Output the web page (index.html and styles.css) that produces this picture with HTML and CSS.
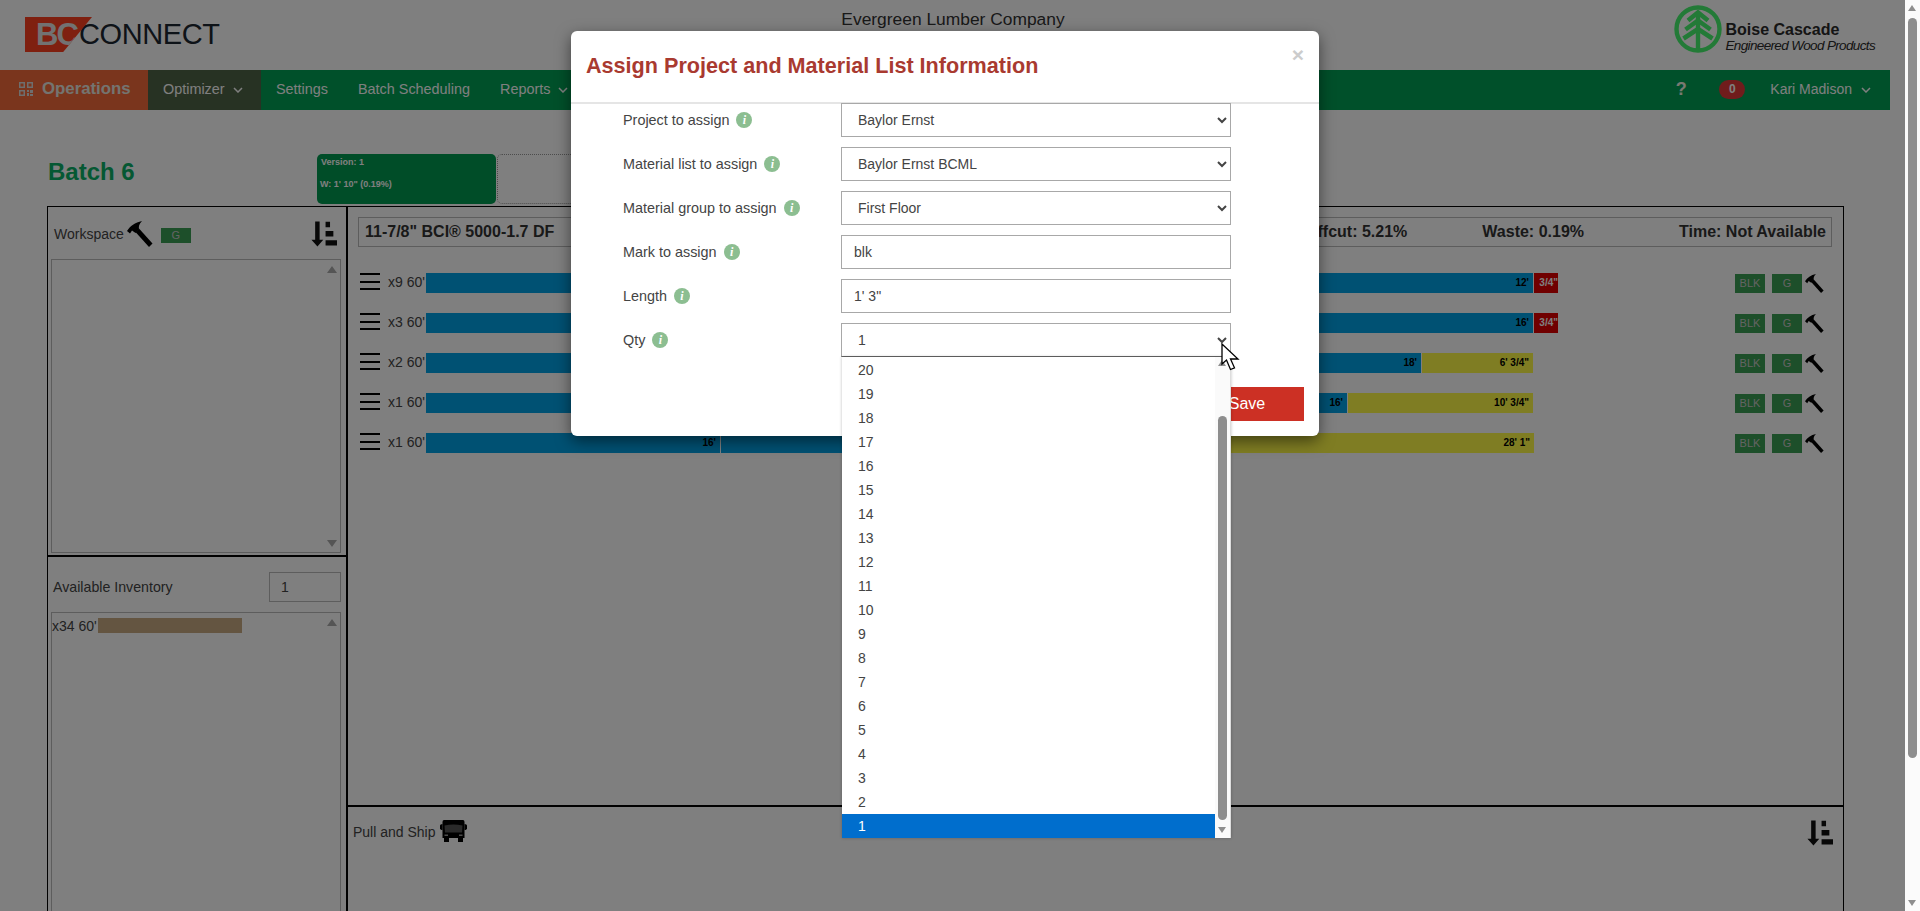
FILE: index.html
```html
<!DOCTYPE html>
<html lang="en">
<head>
<meta charset="utf-8">
<title>BC Connect - Batch 6</title>
<link rel="stylesheet" href="styles.css">
</head>
<body>
<svg class="defs" aria-hidden="true">
  <symbol id="hammer" viewBox="0 0 26 26">
    <path d="M0 10C3 5 8 1.500 15 0 12 3 11.500 5.500 12 8L8.500 12 5 9.500 3 12.500Z" fill="#000"/>
    <path d="M8.500 11 12 7.500 25.500 22.500 22 26Z" fill="#000"/>
  </symbol>
  <symbol id="sort" viewBox="0 0 25 24">
    <path d="M4 0H8.300V17.500H11.800L6.200 24 .4 17.500H4Z" fill="#111"/>
    <path d="M14 .3H18.300V5.500H14ZM14 9H21.500V14.500H14ZM14 18H25V23H14Z" fill="#111"/>
  </symbol>
  <symbol id="chev" viewBox="0 0 10 6">
    <path d="M1 1 5 5 9 1" fill="none" stroke="currentColor" stroke-width="1.5"/>
  </symbol>
</svg>
<div class="shell">
  <div class="page">
    <div class="page-inner">
      <header class="topbar">
        <div class="brand">
          <span class="brand-mark"><span class="brand-bc">BC</span></span>
          <span class="brand-connect">CONNECT</span>
        </div>
        <div class="company">Evergreen Lumber Company</div>
        <div class="boise">
          <svg class="boise-tree" viewBox="0 0 48 48">
            <circle cx="24" cy="24" r="21.500" fill="none" stroke="#46f46e" stroke-width="4.400"/>
            <path d="M21.800 7H26.200V45H21.800Z" fill="#46f46e"/>
            <path d="M14 15.500 24 7.500 34 15.500M11.500 24.500 24 15.500 36.500 24.500M9.500 33.500 24 24 38.500 33.500" fill="none" stroke="#46f46e" stroke-width="4.600"/>
          </svg>
          <div class="boise-text">
            <div class="boise-name">Boise Cascade</div>
            <div class="boise-sub">Engineered Wood Products</div>
          </div>
        </div>
      </header>
      <nav class="nav">
        <a class="nav-ops">
          <svg class="ops-icon" viewBox="0 0 14 14"><path d="M0 0H6V6H0ZM1.500 1.500V4.500H4.500V1.500ZM8 0H14V6H8ZM9.500 1.500V4.500H12.500V1.500ZM0 8H6V14H0ZM1.500 9.500V12.500H4.500V9.500ZM8 8H10V10H8ZM11 8H14V11H11ZM8 11H10V14H8ZM11 12H14V14H11Z" fill="#dcdcdc" fill-rule="evenodd"/></svg>
          Operations
        </a>
        <a class="nav-item nav-active">Optimizer <svg class="chev"><use href="#chev"/></svg></a>
        <a class="nav-item">Settings</a>
        <a class="nav-item">Batch Scheduling</a>
        <a class="nav-item">Reports <svg class="chev"><use href="#chev"/></svg></a>
        <div class="nav-right">
          <span class="nav-help">?</span>
          <span class="nav-pill">0</span>
          <a class="nav-user">Kari Madison <svg class="chev"><use href="#chev"/></svg></a>
        </div>
      </nav>
      <main class="main">
        <div class="batch-head">
          <h1 class="batch-title">Batch 6</h1>
          <div class="tab tab-on">
            <div class="tab-version">Version: 1</div>
            <div class="tab-waste">W: 1' 10" (0.19%)</div>
          </div>
          <div class="tab tab-empty"></div>
        </div>
        <div class="frame">
          <section class="col-left">
            <div class="panel-work">
              <div class="work-head">
                <span>Workspace</span>
                <svg class="hammer-lg"><use href="#hammer"/></svg>
                <span class="tag tag-head">G</span>
                <svg class="sort-icon work-sort"><use href="#sort"/></svg>
              </div>
              <div class="listbox listbox-work">
                <i class="tri-up"></i>
                <i class="tri-down"></i>
              </div>
            </div>
            <div class="panel-inv">
              <div class="inv-head">
                <span class="inv-label">Available Inventory</span>
                <div class="inv-input">1</div>
              </div>
              <div class="listbox listbox-inv">
                <i class="tri-up"></i>
                <div class="inv-row"><span>x34 60'</span><span class="inv-bar"></span></div>
              </div>
            </div>
          </section>
          <section class="col-right">
            <div class="panel-layout">
              <div class="stats">
                <span>11-7/8" BCI® 5000-1.7 DF</span>
                <span class="stat-offcut">Offcut: 5.21%</span>
                <span class="stat-waste">Waste: 0.19%</span>
                <span class="stat-time">Time: Not Available</span>
              </div>
              <div class="rows">
                <div class="row">
                  <span class="burger"><i></i><i></i><i></i></span><span class="row-label">x9 60'</span>
                  <div class="bar">
                    <span class="seg seg-blue" style="width:296px">16'</span><span class="seg seg-blue" style="width:296px">16'</span><span class="seg seg-blue" style="width:296px">16'</span><span class="seg seg-blue" style="width:220px">12'</span><span class="seg seg-red" style="width:24px">3/4"</span>
                  </div>
                  <div class="tools"><span class="tag">BLK</span><span class="tag tag-g">G</span><svg class="hammer"><use href="#hammer"/></svg></div>
                </div>
                <div class="row">
                  <span class="burger"><i></i><i></i><i></i></span><span class="row-label">x3 60'</span>
                  <div class="bar">
                    <span class="seg seg-blue" style="width:296px">16'</span><span class="seg seg-blue" style="width:221px">12'</span><span class="seg seg-blue" style="width:296px">16'</span><span class="seg seg-blue" style="width:295px">16'</span><span class="seg seg-red" style="width:24px">3/4"</span>
                  </div>
                  <div class="tools"><span class="tag">BLK</span><span class="tag tag-g">G</span><svg class="hammer"><use href="#hammer"/></svg></div>
                </div>
                <div class="row">
                  <span class="burger"><i></i><i></i><i></i></span><span class="row-label">x2 60'</span>
                  <div class="bar">
                    <span class="seg seg-blue" style="width:332px">18'</span><span class="seg seg-blue" style="width:332px">18'</span><span class="seg seg-blue" style="width:332px">18'</span><span class="seg seg-olive" style="width:112px">6' 3/4"</span>
                  </div>
                  <div class="tools"><span class="tag">BLK</span><span class="tag tag-g">G</span><svg class="hammer"><use href="#hammer"/></svg></div>
                </div>
                <div class="row">
                  <span class="burger"><i></i><i></i><i></i></span><span class="row-label">x1 60'</span>
                  <div class="bar">
                    <span class="seg seg-blue" style="width:296px">16'</span><span class="seg seg-blue" style="width:332px">18'</span><span class="seg seg-blue" style="width:294px">16'</span><span class="seg seg-olive" style="width:186px">10' 3/4"</span>
                  </div>
                  <div class="tools"><span class="tag">BLK</span><span class="tag tag-g">G</span><svg class="hammer"><use href="#hammer"/></svg></div>
                </div>
                <div class="row">
                  <span class="burger"><i></i><i></i><i></i></span><span class="row-label">x1 60'</span>
                  <div class="bar">
                    <span class="seg seg-blue" style="width:295px">16'</span><span class="seg seg-blue" style="width:295px">16'</span><span class="seg seg-olive" style="width:519px">28' 1"</span>
                  </div>
                  <div class="tools"><span class="tag">BLK</span><span class="tag tag-g">G</span><svg class="hammer"><use href="#hammer"/></svg></div>
                </div>
              </div>
            </div>
            <div class="panel-ship">
              <span>Pull and Ship</span>
              <svg class="truck" viewBox="0 0 27 22">
                <path d="M4 0H23Q24.500 0 24.500 2V18H2.500V2Q2.500 0 4 0Z" fill="#000"/>
                <path d="M0 5.500Q0 4 2.500 4V10H1.500L0 9ZM27 5.500Q27 4 24.500 4V10H25.500L27 9Z" fill="#000"/>
                <path d="M4.500 5.500Q13.500 3.500 22.500 5.500L22 12.500H5Z" fill="#555"/>
                <path d="M4 18H9V22H4ZM18 18H23V22H18Z" fill="#000"/>
                <path d="M4.500 14.500H8V16H4.500ZM19 14.500H22.500V16H19Z" fill="#999"/>
              </svg>
              <svg class="sort-icon ship-sort"><use href="#sort"/></svg>
            </div>
          </section>
        </div>
      </main>
    </div>

    <div class="overlay">
      <div class="modal">
        <div class="modal-head">
          <h2 class="modal-title">Assign Project and Material List Information</h2>
          <span class="modal-close">×</span>
        </div>
        <div class="modal-body">
          <div class="form-row">
            <label class="form-label">Project to assign <i class="info">i</i></label>
            <select class="field"><option>Baylor Ernst</option></select>
          </div>
          <div class="form-row">
            <label class="form-label">Material list to assign <i class="info">i</i></label>
            <select class="field"><option>Baylor Ernst BCML</option></select>
          </div>
          <div class="form-row">
            <label class="form-label">Material group to assign <i class="info">i</i></label>
            <select class="field"><option>First Floor</option></select>
          </div>
          <div class="form-row">
            <label class="form-label">Mark to assign <i class="info">i</i></label>
            <input class="field" value="blk">
          </div>
          <div class="form-row">
            <label class="form-label">Length <i class="info">i</i></label>
            <input class="field" value="1' 3&quot;">
          </div>
          <div class="form-row">
            <label class="form-label">Qty <i class="info">i</i></label>
            <div class="qty-wrap">
              <select class="field field-open"><option>1</option></select>
              <div class="dropdown">
                <div class="options">
                  <div class="opt">20</div><div class="opt">19</div><div class="opt">18</div><div class="opt">17</div>
                  <div class="opt">16</div><div class="opt">15</div><div class="opt">14</div><div class="opt">13</div>
                  <div class="opt">12</div><div class="opt">11</div><div class="opt">10</div><div class="opt">9</div>
                  <div class="opt">8</div><div class="opt">7</div><div class="opt">6</div><div class="opt">5</div>
                  <div class="opt">4</div><div class="opt">3</div><div class="opt">2</div><div class="opt opt-on">1</div>
                </div>
                <div class="dd-scroll">
                  <i class="tri-up dd-up"></i>
                  <i class="dd-thumb"></i>
                  <i class="tri-down dd-down"></i>
                </div>
              </div>
              <svg class="cursor" viewBox="0 0 19 29">
                <path d="M1 1V21L5.500 17 9.500 26.500 13.500 24.800 9.500 16H17Z" fill="#fff" stroke="#000" stroke-width="1.300"/>
              </svg>
            </div>
          </div>
        </div>
        <div class="modal-foot"><button class="btn-save">Save</button></div>
      </div>
    </div>
  </div>
  <div class="page-scroll">
    <i class="tri-up ps-up"></i>
    <i class="ps-thumb"></i>
    <i class="tri-down ps-down"></i>
  </div>
</div>
</body>
</html>
```
FILE: styles.css
```css
* { box-sizing: border-box; }
html, body { margin: 0; height: 100%; overflow: hidden; }
body { font-family: "Liberation Sans", Arial, sans-serif; font-size: 14px; color: #444; background: #fff; }
.defs { display: none; }
.shell { display: flex; height: 911px; }
.page { position: relative; width: 1905px; height: 911px; overflow: hidden; background: #fff; }
.page-inner { width: 1890px; }

/* scrollbar of the page */
.page-scroll { position: relative; width: 15px; background: #fbfbfb; }
.ps-thumb { position: absolute; left: 3px; top: 18px; width: 9px; height: 740px; background: #8e8e8e; border-radius: 5px; }
.ps-up { position: absolute; left: 3px; top: 5px; }
.ps-down { position: absolute; left: 3px; bottom: 5px; }
.tri-up, .tri-down { display: block; width: 0; height: 0; border-left: 4.500px solid transparent; border-right: 4.500px solid transparent; }
.tri-up { border-bottom: 6px solid #8e8e8e; }
.tri-down { border-top: 6px solid #8e8e8e; }

/* top bar */
.topbar { height: 70px; display: grid; grid-template-columns: 1fr auto 1fr; padding: 0 15px 0 25px; }
.brand { display: flex; align-items: center; height: 35px; margin-top: 17px; }
.brand-mark { display: flex; align-items: center; width: 67px; height: 35px; padding-left: 11px; background: #ff4020; clip-path: polygon(0 0, 100% 0, 57% 100%, 0 100%); }
.brand-bc { font-size: 31px; font-weight: 700; letter-spacing: -2px; color: #e4e4e4; }
.brand-connect { margin-left: -13px; font-size: 29px; letter-spacing: -.4px; color: #1c2730; }
.company { margin: 9px 0 0 6px; font-size: 17.400px; line-height: 20px; color: #333; }
.boise { display: flex; justify-self: end; margin-top: 5px; gap: 4px; }
.boise-tree { width: 48px; height: 48px; }
.boise-text { margin-top: 17px; color: #2a2a2a; }
.boise-name { font-size: 16px; font-weight: 700; line-height: 16px; }
.boise-sub { font-size: 13.500px; font-style: italic; line-height: 15px; letter-spacing: -.65px; }

/* navigation */
.nav { display: flex; align-items: stretch; height: 40px; padding-bottom: 2px; background: #00a055; color: #fff; font-size: 14.400px; }
.nav-ops { display: flex; align-items: center; width: 148px; height: 40px; padding-left: 19px; gap: 9px; padding-bottom: 2px; background: #f46a3a; font-size: 16.800px; font-weight: 700; color: #e8e8e0; }
.ops-icon { width: 14px; height: 14px; }
.nav-item { display: flex; align-items: center; gap: 8px; padding: 0 15px; }
.nav-active { width: 113px; height: 40px; padding-bottom: 2px; background: #4f6446; }
.chev { width: 10px; height: 6px; margin-top: 2px; }
.nav-right { display: flex; align-items: center; margin-left: auto; padding-right: 19px; }
.nav-help { width: 16px; font-size: 18px; font-weight: 700; color: #f2f2e4; text-align: center; }
.nav-pill { width: 26px; height: 19px; margin-left: 30px; border-radius: 10px; background: #e03838; font-size: 12px; font-weight: 700; line-height: 19px; text-align: center; }
.nav-user { display: flex; align-items: center; gap: 9px; margin-left: 25px; font-size: 14px; }

/* main */
.main { padding: 44px 0 0 47px; }
.batch-head { display: flex; height: 52px; }
.batch-title { width: 270px; margin: 3px 0 0; padding-left: 1px; font-size: 24px; line-height: 30px; font-weight: 700; color: #0ab066; }
.tab { width: 179px; height: 50px; border-radius: 5px; }
.tab-on { padding: 2px 3px; background: #009a50; font-size: 9px; font-weight: 700; line-height: 12px; color: #fff; }
.tab-version { padding-left: 1px; }
.tab-waste { margin-top: 10px; }
.tab-empty { margin-left: 1px; border: 1px dotted #999; }

.frame { display: grid; grid-template-columns: 300px 1fr; width: 1797px; height: 760px; border: 1px solid #000; }
.col-left { display: flex; flex-direction: column; border-right: 2px solid #000; }
.panel-work { height: 350px; padding: 0 5px 2px 3px; border-bottom: 2px solid #000; }
.work-head { display: flex; align-items: center; height: 52px; padding: 2px 0 0 3px; }
.hammer-lg { width: 26px; height: 26px; margin: 0 0 0 3px; }
.tag { display: block; width: 30px; height: 19px; background: #3a9e55; color: #c8c8c8; font-size: 11px; line-height: 19px; text-align: center; }
.tag-g { margin-left: 7px; }
.tag-head { height: 15px; margin: 2px 0 0 8px; line-height: 15px; }
.sort-icon { width: 26px; height: 26px; }
.work-sort { margin: 0 4px 0 auto; }
.listbox { position: relative; border: 1px solid #bbb; }
.listbox-work { height: 294px; }
.listbox-inv { height: 300px; }
.listbox .tri-up, .listbox .tri-down { position: absolute; right: 3px; border-left-width: 5px; border-right-width: 5px; border-bottom-color: #aaa; border-top-color: #aaa; }
.listbox .tri-up { top: 6px; border-bottom-width: 7px; }
.listbox .tri-down { bottom: 5px; border-top-width: 7px; }
.panel-inv { padding: 0 5px 0 3px; }
.inv-head { display: flex; align-items: center; justify-content: space-between; height: 55px; padding: 5px 0 0 2px; }
.inv-label { font-size: 14.200px; }
.inv-input { width: 72px; height: 30px; padding-left: 11px; border: 1px solid #bbb; line-height: 28px; }
.inv-row { display: flex; align-items: center; height: 15px; margin-top: 5px; white-space: nowrap; }
.inv-bar { width: 144px; height: 15px; margin-left: 1px; background: #c8aa82; }

.panel-layout { height: 600px; padding: 10px 11px 0 10px; border-bottom: 2px solid #000; }
.stats { display: flex; align-items: center; height: 30px; padding: 0 5px 0 6px; border: 1px solid #bbb; font-size: 16px; font-weight: 700; color: #333; }
.stat-offcut { margin-left: auto; }
.stat-waste { margin-left: 75px; }
.stat-time { margin-left: 95px; }
.rows { display: flex; flex-direction: column; gap: 20px; margin-top: 26px; }
.row { display: flex; align-items: center; height: 20px; }
.burger { display: flex; flex-direction: column; justify-content: space-between; align-self: flex-start; width: 20px; height: 17px; margin: 0 8px 0 2px; }
.burger i { display: block; height: 2px; background: #000; }
.row-label { width: 38px; margin-top: -2px; white-space: nowrap; }
.bar { display: flex; width: 1132px; height: 20px; }
.seg { display: block; height: 20px; padding-right: 4px; border-right: 1px solid #fff; color: #000; font-size: 10px; font-weight: 700; line-height: 20px; text-align: right; white-space: nowrap; }
.seg-blue { background: #00a2e6; }
.seg-olive { background: #fffa46; }
.seg-red { padding-right: 0; background: #e00000; color: #fff; border-right: 0; }
.tools { display: flex; margin-left: 177px; }
.hammer { width: 19px; height: 19px; margin-left: 3px; }
.panel-ship { display: flex; align-items: flex-start; padding: 13px 10px 0 5px; }
.panel-ship > span { line-height: 24px; }
.truck { width: 27px; height: 22px; margin-left: 4px; }
.ship-sort { margin-left: auto; }

/* modal */
.overlay { position: absolute; inset: 0; display: flex; justify-content: center; padding: 31px 15px 0 0; background: rgba(0, 0, 0, .5); }
.modal { width: 748px; height: 405px; border-radius: 6px; background: #fff; box-shadow: 0 5px 15px rgba(0, 0, 0, .5); }
.modal-head { display: flex; justify-content: space-between; height: 73px; padding: 0 15px; border-bottom: 2px solid #e5e5e5; }
.modal-title { margin: 21px 0 0; font-size: 21.600px; line-height: 28px; font-weight: 700; color: #a93a30; }
.modal-close { margin: 12px 0 0; font-size: 21px; line-height: 24px; font-weight: 700; color: #ccc; }
.modal-body { display: flex; flex-direction: column; gap: 10px; margin-top: -1px; padding-left: 52px; }
.form-row { display: grid; grid-template-columns: 218px 390px; height: 34px; align-items: center; }
.form-label { display: flex; align-items: center; gap: 7px; color: #444; font-size: 14.400px; }
.info { display: block; width: 16px; height: 16px; border-radius: 50%; background: #8cbe91; color: #fff; font-family: "Liberation Serif", serif; font-size: 12px; font-weight: 700; line-height: 16px; text-align: center; }
.field { width: 390px; height: 34px; padding: 0 12px; border: 1px solid #a8a8a8; border-radius: 0; background: #fff; color: #444; font: 14px "Liberation Sans", Arial, sans-serif; outline: 0; }
.field-open { border-bottom-color: #666; }
.qty-wrap { position: relative; height: 34px; }
.dropdown { position: absolute; left: 1px; top: 34px; display: flex; width: 389px; height: 481px; background: #fff; box-shadow: 0 0 3px rgba(0, 0, 0, .25); border-right: 1px solid #ddd; }
.options { flex: 1; display: flex; flex-direction: column; padding-top: 1px; }
.opt { height: 24px; padding-left: 16px; color: #444; line-height: 24px; }
.opt-on { background: #006ecd; color: #fff; }
.dd-scroll { position: relative; width: 15px; background: #fafafa; }
.dd-thumb { position: absolute; left: 3px; top: 59px; width: 9px; height: 404px; background: #8e8e8e; border-radius: 5px; }
.dd-up { position: absolute; left: 3px; top: 3px; }
.dd-down { position: absolute; left: 3px; bottom: 5px; }
.cursor { position: absolute; left: 380px; top: 20px; width: 19px; height: 29px; }
.modal-foot { display: flex; justify-content: flex-end; padding: 30px 15px 0 0; }
.btn-save { width: 114px; height: 34px; border: 0; background: #cc3024; color: #fff; font: 16px "Liberation Sans", Arial, sans-serif; }
```
